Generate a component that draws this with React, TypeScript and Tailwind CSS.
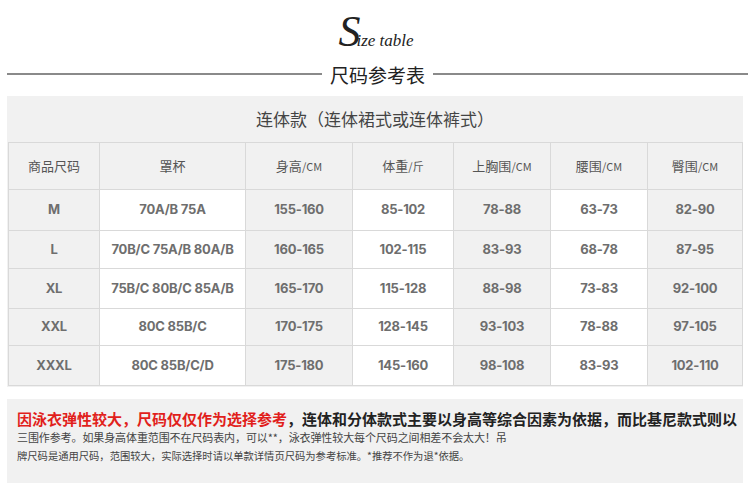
import clsx from 'clsx';

const cjk = "font-['Noto_Sans_CJK_SC','Noto_Sans',sans-serif]";

const columns = [
  { w: 'w-[91px]', label: '商品尺码', unit: '' },
  { w: 'w-[146px]', label: '罩杯', unit: '' },
  { w: 'w-[107px]', label: '身高', unit: '/CM' },
  { w: 'w-[101px]', label: '体重', unit: '/斤' },
  { w: 'w-[97px]', label: '上胸围', unit: '/CM' },
  { w: 'w-[97px]', label: '腰围', unit: '/CM' },
  { w: 'w-[95px]', label: '臀围', unit: '/CM' },
];

const rows = [
  { h: 'h-[41px]', cells: ['M', '70A/B 75A', '155-160', '85-102', '78-88', '63-73', '82-90'] },
  { h: 'h-[38px]', cells: ['L', '70B/C 75A/B 80A/B', '160-165', '102-115', '83-93', '68-78', '87-95'] },
  { h: 'h-[40px]', cells: ['XL', '75B/C 80B/C 85A/B', '165-170', '115-128', '88-98', '73-83', '92-100'] },
  { h: 'h-[37px]', cells: ['XXL', '80C 85B/C', '170-175', '128-145', '93-103', '78-88', '97-105'] },
  { h: 'h-[40px]', cells: ['XXXL', '80C 85B/C/D', '175-180', '145-160', '98-108', '83-93', '102-110'] },
];

const App = () => {
  return (
    <div className="w-[750px] h-[486px] bg-white overflow-hidden">
      {/* 상단 타이틀 */}
      <div className="h-[60px] flex justify-center items-end pb-[6px] pl-[2px]">
        <span className="font-['Liberation_Serif',serif] italic text-[#222] leading-none">
          <span className="text-[44px]">S</span>
          <span className="text-[17px] ml-[-4px]">ize table</span>
        </span>
      </div>
      <div className="h-[28px] flex items-center pl-[7px] pr-[2px]">
        <div className="flex-1 h-[1.5px] bg-[#8a8a8a]" />
        <span className={clsx(cjk, 'px-[8px] text-[19px] text-[#222] leading-none')}>
          尺码参考表
        </span>
        <div className="flex-1 h-[1.5px] bg-[#8a8a8a]" />
      </div>

      {/* 표 */}
      <div className="mt-[8px] mx-[7px] w-[736px] bg-[#f1f1f1] px-px pb-px">
        <div className={clsx(cjk, 'h-[46px] flex items-center justify-center text-[17px] text-[#444]')}>
          连体款（连体裙式或连体裤式）
        </div>
        <table className="border-collapse table-fixed w-[734px]">
          <thead>
            <tr className="h-[47px]">
              {columns.map((c) => (
                <th
                  key={c.label}
                  className={clsx(
                    c.w,
                    cjk,
                    'border border-[#d9d9d9] font-normal text-[13px] text-[#555] bg-[#f1f1f1]'
                  )}
                >
                  {c.label}
                  {c.unit && <span className="text-[11px]">{c.unit}</span>}
                </th>
              ))}
            </tr>
          </thead>
          <tbody>
            {rows.map((r) => (
              <tr key={r.cells[0]} className={r.h}>
                {r.cells.map((v, i) => (
                  <td
                    key={i}
                    className={clsx(
                      i % 2 === 1 ? 'bg-white' : 'bg-[#f1f1f1]',
                      "border border-[#d9d9d9] text-center font-['Inter',sans-serif] font-bold text-[13px] text-[#6e6e6e] tracking-[-0.2px]"
                    )}
                  >
                    {v}
                  </td>
                ))}
              </tr>
            ))}
          </tbody>
        </table>
      </div>

      {/* 안내 문구 */}
      <div className={clsx(cjk, 'mt-[12px] mx-[7px] w-[736px] h-[84px] bg-[#f1f1f1] px-[10px] pt-[11px]')}>
        <p className="text-[15px] font-bold leading-[18px] whitespace-nowrap">
          <span className="text-[#e11f1c]">因泳衣弹性较大，尺码仅仅作为选择参考</span>
          <span className="text-[#222]">，连体和分体款式主要以身高等综合因素为依据，而比基尼款式则以</span>
        </p>
        <p className="mt-[1px] text-[11px] leading-[16px] text-[#444] whitespace-nowrap tracking-[-0.1px]">
          三围作参考。如果身高体重范围不在尺码表内，可以**，泳衣弹性较大每个尺码之间相差不会太大！吊
        </p>
        <p className="mt-[3px] text-[10.3px] leading-[16px] text-[#444] whitespace-nowrap">
          牌尺码是通用尺码，范围较大，实际选择时请以单款详情页尺码为参考标准。*推荐不作为退*依据。
        </p>
      </div>
    </div>
  );
};

export default App;
